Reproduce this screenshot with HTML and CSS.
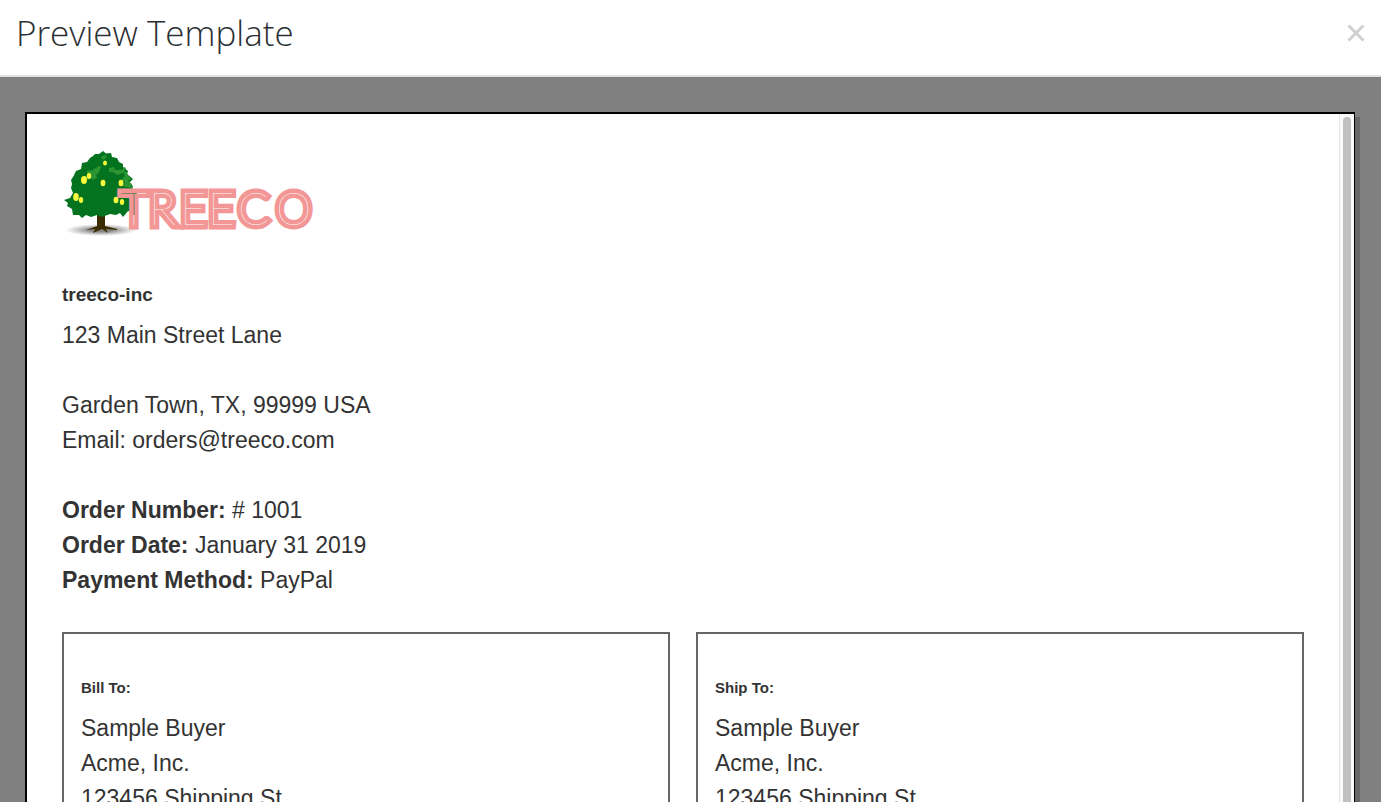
FILE: index.html
```html
<!DOCTYPE html>
<html lang="en">
<head>
  <meta charset="UTF-8" />
  <title>Preview Template</title>
  <meta name="viewport" content="width=device-width, initial-scale=1" />
  <link rel="stylesheet" href="styles.css">
</head>
<body>

  <div class="modal">

    <!-- Header -->
    <header class="modal-header">
      <h1 class="modal-title">Preview Template</h1>
      <button class="close" type="button" aria-label="Close">
        <svg width="18" height="18" viewBox="0 0 18 18"><path d="M1.5 1.5l15 15M16.5 1.5l-15 15" /></svg>
      </button>
    </header>

    <!-- Template -->
    <main class="modal-body">
      <div class="sheet">
        <div class="sheet-content">

          <svg class="logo" width="256" height="90" viewBox="0 0 256 90" role="img" aria-label="Treeco">
            <defs>
              <radialGradient id="ground">
                <stop offset="0.3" stop-color="#777" stop-opacity="0.9" />
                <stop offset="1" stop-color="#999" stop-opacity="0" />
              </radialGradient>
              <!-- inline of the letters: leaves behind the T, paper elsewhere -->
              <pattern id="inline" width="256" height="90" patternUnits="userSpaceOnUse">
                <rect width="256" height="90" fill="#fff" />
                <rect width="75" height="66" fill="#2f6b3a" />
              </pattern>
            </defs>
            <ellipse cx="39" cy="81" rx="36" ry="6" fill="url(#ground)" />
            <path fill="#3a2e00" d="M35 64h8l0 13 12 3 0 1-11-1 2 4-6-4-9 4 2-4-9 1 11-4z" />
            <path fill="#04731f" d="M41 2L44 4.500 49 4 50 8 55 9 57 13 61 15 61 18 66 22 65 25 71 30 67 34 71 37 70 41 73 45 72 50 76 55 73 61 70 63 66 62 61 68 58 64 54 66 48 65 40 68 35 66 29 68 24 66 20 69 17 66 11 66 10 60 5 57 6 54 2 51 8 49 11 44 9 39 10 35 9 31 11 28 14 22 19 20 20 14 25 13 28 9 31 7 33 5 37 5z" />
            <path fill="#2c9430" d="M20 30l5-4 0-4 5-1-2 5 4 0-4 4-4 1zM27 25l5-5 5-3 2 0-2 6-3 3 1 3-5 2-1-3zM47 19l5-1 1 3 7 0 2-3 2 1-3 5-6 2-4-3-4 0zM61 22l4 1 1 4 3 3-3 2 4 3 0 4-6-1-4-1 3-3-3-4 3-3zM39 8l4-2 2 2-4 3z" />
            <g fill="#f8f83c">
              <ellipse cx="22" cy="31" rx="3" ry="4" />
              <ellipse cx="27" cy="27" rx="2.200" ry="3" />
              <ellipse cx="43" cy="14" rx="2" ry="2.500" />
              <ellipse cx="41" cy="34" rx="2.400" ry="3.300" />
              <ellipse cx="59" cy="34" rx="2.400" ry="3.300" />
              <ellipse cx="14" cy="48" rx="2.800" ry="4" />
              <ellipse cx="19" cy="51" rx="2.200" ry="3" />
              <ellipse cx="54" cy="51" rx="2.400" ry="3.300" />
              <ellipse cx="60" cy="53" rx="2.200" ry="3" />
            </g>
            <text class="wordmark" x="59 87 118 146 176 214" y="76">TREECO</text>
          </svg>

          <h2 class="company">treeco-inc</h2>
          <p class="lines">
            123 Main Street Lane<br>
            <br>
            Garden Town, TX, 99999 USA<br>
            Email: orders@treeco.com
          </p>

          <p class="lines order">
            <strong>Order Number:</strong> # 1001<br>
            <strong>Order Date:</strong> January 31 2019<br>
            <strong>Payment Method:</strong> PayPal
          </p>

          <div class="addresses">
            <section class="address">
              <h3 class="address-title">Bill To:</h3>
              <p class="lines">
                Sample Buyer<br>
                Acme, Inc.<br>
                123456 Shipping St
              </p>
            </section>
            <section class="address">
              <h3 class="address-title">Ship To:</h3>
              <p class="lines">
                Sample Buyer<br>
                Acme, Inc.<br>
                123456 Shipping St
              </p>
            </section>
          </div>

        </div>
        <div class="scrollbar"><div class="thumb"></div></div>
      </div>
    </main>

  </div>

</body>
</html>
```
FILE: styles.css
```css
* { box-sizing: border-box; }
html, body { height: 100%; margin: 0; overflow: hidden; }
body {
  background: #fff;
  color: #333;
  font-family: "Liberation Sans", Arial, sans-serif;
  font-size: 23px;
  line-height: 35px;
}

h1, h2, h3, p { margin: 0; }

.modal {
  display: flex;
  flex-direction: column;
  height: 100%;
}

.modal-header {
  display: flex;
  justify-content: space-between;
  align-items: flex-start;
  padding: 8px 16px 17px;
  border-bottom: 2px solid #e0e1e1;
}

.modal-title {
  font: 300 35px/50px "Open Sans", sans-serif;
  color: #2b2f33;
}

.close {
  display: flex;
  padding: 16px 0;
  border: 0;
  background: none;
  cursor: pointer;
}

.close svg {
  fill: none;
  stroke: #d0d0d0;
  stroke-width: 3;
}

.modal-body {
  flex: 1;
  min-height: 0;
  padding: 35px 26px 0 25px;
  background: #808080;
}

.sheet {
  display: flex;
  height: 100%;
  border: 2px solid #000;
  border-width: 2px 1px 0 2px;
  background: #fff;
  box-shadow: 5px 5px 0 #666;
}

.sheet-content {
  flex: 1;
  padding: 35px 35px 0;
  overflow: hidden;
}

.scrollbar {
  width: 15px;
  padding: 3px 3px 0;
  border-left: 1px solid #e7e7e7;
  background: #fafafa;
}

.thumb {
  width: 8px;
  height: 100%;
  border-radius: 4px 4px 0 0;
  background: #c1c1c1;
}

.logo {
  display: block;
  margin-bottom: 45px;
}

.wordmark {
  font: 100 45px Lato, sans-serif;
  fill: url(#inline);
  stroke: #f29696;
  stroke-width: 9px;
  paint-order: stroke;
}

.company {
  margin-bottom: 13px;
  font-size: 19px;
  line-height: 21px;
}

.order {
  margin: 35px 0 34px;
}

.addresses {
  display: grid;
  grid-template-columns: 1fr 1fr;
  gap: 26px;
}

.address {
  padding: 45px 17px;
  border: 2px solid #666;
}

.address-title {
  margin-bottom: 15px;
  font-size: 15px;
  line-height: 17px;
}
```
